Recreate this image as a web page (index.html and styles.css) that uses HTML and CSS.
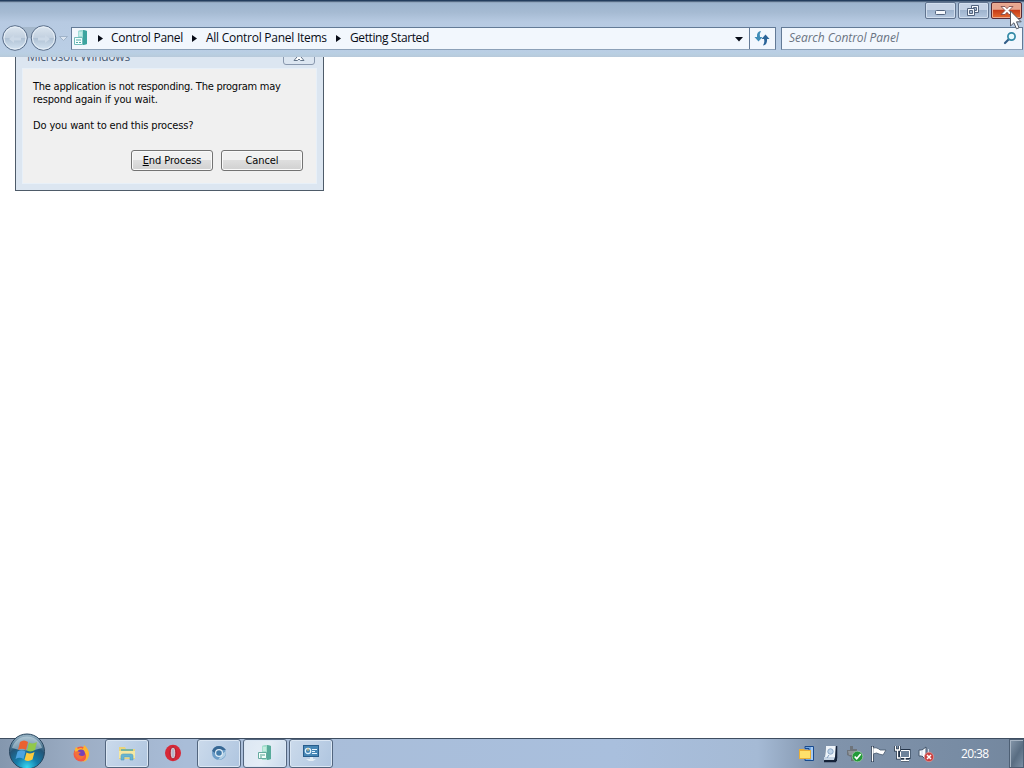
FILE: index.html
```html
<!DOCTYPE html>
<html lang="en">
<head>
<meta charset="utf-8">
<title>Getting Started</title>
<link rel="stylesheet" href="styles.css">
</head>
<body>
<div class="screen">
  <header class="window-frame">
    <div class="caption">
      <button class="cap-btn" aria-label="Minimize"><svg width="29" height="15" viewBox="0 0 29 15"><rect x="9.500" y="7.500" width="10" height="4" rx="1" fill="#f5f8fc" stroke="#53647e"/></svg></button>
      <button class="cap-btn" aria-label="Restore"><svg width="29" height="15" viewBox="0 0 29 15"><path d="M12.500 2.500h7v7h-7z" fill="#f5f8fc" stroke="#53647e"/><path d="M14.500 4.500h3v3h-3z" fill="#a4b7cf" stroke="#53647e"/><path d="M8.500 5.500h7v7h-7z" fill="#f5f8fc" stroke="#53647e"/><path d="M10.500 7.500h3v3h-3z" fill="#a4b7cf" stroke="#53647e"/></svg></button>
      <button class="cap-btn cap-close" aria-label="Close"><svg width="29" height="15" viewBox="0 0 29 15"><path d="M9 3.500h4l2 2.200 2-2.200h4l-4 4 4 4h-4l-2-2.200-2 2.200H9l4-4z" fill="#fff" stroke="#754040" stroke-width=".8"/></svg></button>
    </div>
    <div class="nav">
      <svg class="travel" width="70" height="32" viewBox="0 0 70 32">
        <defs><linearGradient id="ball" x2="0" y2="1"><stop stop-color="#dce6f0"/><stop offset=".48" stop-color="#c3d1e0"/><stop offset=".52" stop-color="#b0c2d5"/><stop offset="1" stop-color="#d5e4f2"/></linearGradient></defs>
        <path d="M14 5h30v8q-15 6-30 0z" fill="#a5b8cc"/>
        <g fill="url(#ball)" stroke="#596d88"><circle cx="15" cy="16" r="12.300"/><circle cx="43.500" cy="16" r="12.300"/></g>
        <g fill="none" stroke="#e7eff7"><circle cx="15" cy="16" r="11"/><circle cx="43.500" cy="16" r="11"/></g>
        <path d="M9 17l5-4v2.500h7v3h-7V21zM50 17l-5-4v2.500h-7v3h7V21z" fill="#ccd9e7"/>
        <path d="M59.500 14.500h8l-4 4z" fill="#dce6f1" stroke="#a0b3c9"/>
      </svg>
      <div class="address">
        <svg class="place" width="16" height="18" viewBox="0 0 16 18"><path d="M5 2l5-1 4 1v13l-4 1-5-1z" fill="#55b5b0"/><path d="M5 2l5-1v15H5z" fill="#a2ddd8"/><path d="M10 1l4 1v13l-4 1z" fill="#3da49f"/><path d="M6 4h3M6 6h3" stroke="#e2faf6"/><path d="M1.500 8.500h8v7h-8z" fill="#f4fffe" stroke="#73bcbb"/><path d="M3 11h5M3 13.500h2M6 13.500h2" stroke="#53aaa8"/></svg>
        <svg class="sep s1" width="5" height="7"><path d="M0 0l5 3.500-5 3.500z"/></svg>
        <span class="crumb c1">Control Panel</span>
        <svg class="sep" width="5" height="7"><path d="M0 0l5 3.500-5 3.500z"/></svg>
        <span class="crumb c2">All Control Panel Items</span>
        <svg class="sep" width="5" height="7"><path d="M0 0l5 3.500-5 3.500z"/></svg>
        <span class="crumb c3">Getting Started</span>
        <svg class="drop" width="8" height="5"><path d="M0 0h8l-4 4.500z"/></svg>
        <span class="refresh"><svg width="16" height="16" viewBox="0 0 16 16"><path d="M7 1Q2.500 1.500 3 7H.5l4 4.500 4-4.500H6Q5 4 7 1z" fill="#3f8db8"/><path d="M9 15.500q4.500-.5 4-6.500h2.500l-4-4.500-4 4.500H10q1 3.500-1 6.500z" fill="#2c6599"/></svg></span>
      </div>
      <div class="search">
        <span class="hint">Search Control Panel</span>
        <svg width="14" height="14" viewBox="0 0 14 14"><path d="M6 8l-4 4" stroke="#305d87" stroke-width="2.200" stroke-linecap="round"/><circle cx="8.500" cy="5.500" r="3.600" fill="#e8faff" stroke="#3289a6" stroke-width="1.700"/></svg>
      </div>
    </div>
  </header>
  <main class="content">
    <section class="dialog">
      <div class="dialog-title"><span>Microsoft Windows</span>
        <i class="dialog-close"><svg width="30" height="14" viewBox="0 0 30 14"><path d="M10.500 3.500h3l1.500 2 1.500-2h3l-2.500 3.500 3 3.500h-3.500L15 9l-1.500 1.500H10L13 7z" fill="#fff" stroke="#637488"/></svg></i>
      </div>
      <div class="dialog-body">
        <p><span class="l1">The application is not responding. The program may</span><br><span class="l2">respond again if you wait.</span></p>
        <p class="l3">Do you want to end this process?</p>
        <div class="actions"><button><span class="b1"><u>E</u>nd Process</span></button><button><span class="b2">Cancel</span></button></div>
      </div>
    </section>
  </main>
  <footer class="taskbar">
    <svg class="orb" width="38" height="36" viewBox="0 0 38 36">
      <defs><radialGradient id="orb" cx=".5" cy=".95" r=".9"><stop stop-color="#35d8f2"/><stop offset=".35" stop-color="#157daa"/><stop offset=".7" stop-color="#245577"/><stop offset="1" stop-color="#91aec0"/></radialGradient></defs>
      <circle cx="19" cy="18.500" r="17.500" fill="url(#orb)" stroke="#29465f"/>
      <path d="M4 15a15.500 15.500 0 0 1 30 0q-15 5-30 0z" fill="#d6e6ed" opacity=".5"/>
      <path d="M12 9q4-3 8 0l-2 8q-4-2.500-8 0z" fill="#ea6230"/><path d="M21 9.500q4 2 8-.5l-2 8q-4 2.500-8 .5z" fill="#91c84b"/><path d="M9.500 18.500q4-2.500 8 0l-2 7.500q-4-2.500-8 0z" fill="#4da3df"/><path d="M18.500 19.500q4 2 8-.5l-2 7.500q-4 2.500-8 .5z" fill="#fdca3c"/>
    </svg>
    <span class="task t-fire"><svg width="18" height="18" viewBox="0 0 18 18"><circle cx="9" cy="10" r="7.500" fill="#f45a45"/><path d="M3 5l1-2 2 2q3-2 5 0l1-4q5 4 5 9 0 7-7 8 5-2 4-7-1-4-5-3-4 0-6 1z" fill="#ffb52e"/><circle cx="9" cy="9.500" r="3.900" fill="#7642b8"/><path d="M2 8q4-2 7 1-3 0-2 2 3 2 6 0-2 5-6 4-4-2-5-7z" fill="#f4703a"/></svg></span>
    <span class="task framed"><svg width="18" height="18" viewBox="0 0 18 18"><path d="M1 3h6l1 2h9v10H1z" fill="#ead47b"/><path d="M3 5h12v3H3z" fill="#77b4a1"/><path d="M1 7h16v7H1z" fill="#f5e8a3"/><path d="M3 16v-4q0-2 2-2h8q2 0 2 2v4h-3v-3H6v3z" fill="#67b5d2" stroke="#579bb9" stroke-width=".6"/></svg></span>
    <span class="task t-opera"><svg width="18" height="18" viewBox="0 0 18 18"><ellipse cx="9" cy="9" rx="8" ry="8.300" fill="#d72837"/><ellipse cx="9" cy="9" rx="2.900" ry="6" fill="#e0c8cf" stroke="#a51525"/><ellipse cx="9" cy="9" rx="1.300" ry="4.700" fill="#b5b9cb"/></svg></span>
    <span class="task framed"><svg width="18" height="18" viewBox="0 0 18 18"><circle cx="9" cy="9" r="7" fill="#6c9dc8"/><path d="M2 7q2-5 7-5 4 0 7 4H9Q6 6 5 9z" fill="#386894"/><path d="M16 7q0 8-8 9l4-6z" fill="#b1cee4"/><circle cx="9" cy="9" r="3.400" fill="#427baa" stroke="#e0edf7" stroke-width="1.200"/></svg></span>
    <span class="task framed active"><svg width="18" height="18" viewBox="0 0 18 18"><path d="M6 2l5-1 4 1v13l-4 1-5-1z" fill="#70bda9"/><path d="M6 2l5-1v15H6z" fill="#a5dfcd"/><path d="M11 1l4 1v13l-4 1z" fill="#58ab9a"/><path d="M7 4h3M7 6h3" stroke="#e2faf2"/><path d="M2.500 8.500h8v6h-8z" fill="#f4fffb" stroke="#66aba0"/><path d="M4 11h5M4 13h2" stroke="#53a08f"/></svg></span>
    <span class="task framed"><svg width="18" height="18" viewBox="0 0 18 18"><rect x="1.500" y="1.500" width="15" height="11" fill="#4686b5" stroke="#285d8c"/><circle cx="6" cy="7" r="2.700" fill="none" stroke="#dff1ff" stroke-width="1.200"/><path d="M6 7V4" stroke="#e4c46a"/><path d="M10 5.500h5M10 7.500h3M10 9.500h5" stroke="#e6f4ff"/><path d="M8 13h3v2h3l-3 2H7l-3-2h4z" fill="#e4edf4"/></svg></span>
    <div class="tray">
      <svg width="18" height="18" viewBox="0 0 18 18"><path d="M7 1.500h8.500v14H7v-2h4v-10H7z" fill="#73a9e4" stroke="#184a8e"/><path d="M14 2v13" stroke="#dceaff"/><path d="M1 4h5l1 1h6v9H1z" fill="#e9ae35"/><path d="M2 6h10v7H2z" fill="#ffe16b"/></svg>
      <svg width="18" height="18" viewBox="0 0 18 18"><path d="M4 1h11v15H2l1-4z" fill="#162538"/><path d="M4 1h10l-1 11H3z" fill="#eef4fa"/><path d="M2 12h11l-1 3H2z" fill="#c7d5e5"/><path d="M14.500 1v12l-1 3.500H2" fill="none" stroke="#142239" stroke-width="1.500"/><circle cx="8.500" cy="6.500" r="2.700" fill="#bed2e7" stroke="#8aa6c5"/><path d="M7 10l-2 3" stroke="#809bbc"/></svg>
      <svg width="18" height="18" viewBox="0 0 18 18"><path d="M4 1h3v3h4v8H8v4H5v-4L1 10V5h3z" fill="#6e747b"/><path d="M2 6h7v4H3z" fill="#91969b"/><circle cx="11.500" cy="11.500" r="5.300" fill="#239a38" stroke="#b7d8be" stroke-width=".6"/><path d="M8.700 11.500l2 2.300 4-4.800" fill="none" stroke="#fff" stroke-width="1.700"/></svg>
      <svg width="18" height="18" viewBox="0 0 18 18"><path d="M2.500 1v16" stroke="#26374e" stroke-width="3"/><path d="M3 3q3-1 6 1l1 1h6l-3 5-4-1q-2-2-6 0z" fill="#fff" stroke="#48596d" stroke-width=".8"/><path d="M2.500 1.500v15" stroke="#fff" stroke-width="1.400"/></svg>
      <svg width="18" height="18" viewBox="0 0 18 18"><path d="M6 5.500h9v7H6z" fill="#63768b" stroke="#233449" stroke-width="3"/><path d="M6.500 5.500h9v7h-9z" fill="#6d8299" stroke="#fff"/><path d="M11 13v2m-4 .5h8M1.500 1v4h4V1M3.500 5v8h3" fill="none" stroke="#24364b" stroke-width="3"/><path d="M11 13v2m-4 .5h8M1.500 1v4h4V1M3.500 5v8h3" fill="none" stroke="#fff" stroke-width="1.300"/></svg>
      <svg width="18" height="18" viewBox="0 0 18 18"><path d="M1 5h3l4-3v13l-4-4H1z" fill="#f7fafd" stroke="#44566c"/><path d="M4 5v6M10.500 4v4" stroke="#c9d5e3"/><circle cx="11" cy="12" r="4.700" fill="#cc4140" stroke="#e9aaa8" stroke-width=".6"/><path d="M9 10l4 4m0-4l-4 4" stroke="#fff" stroke-width="1.500"/></svg>
      <time>20:38</time><span class="peek"></span>
    </div>
  </footer>
  <svg class="pointer" width="14" height="21" viewBox="0 0 14 21"><path d="M1.500 1v15l3.400-3.200 2.600 6 2.500-1-2.500-6h4.700z" fill="#fff" stroke="#555963"/></svg>
</div>
</body>
</html>
```

FILE: styles.css
```css
* { box-sizing: border-box; }
body { margin: 0; background: #fff; }
svg { display: block; flex: none; }
button { padding: 0; margin: 0; }
.screen { position: relative; width: 1024px; height: 768px; display: flex; flex-direction: column; overflow: hidden; }
.window-frame { height: 57px; flex: none; background: linear-gradient(#243d5d 0 1px, #8799ae 2px, #9db4ce 3px, #a5bad2 12px, #b7cae2 22px, #bacee5 50px, #b9cfe2 54px, #b7c9da); }
.caption { height: 22px; display: flex; justify-content: flex-end; gap: 2px; padding: 2px 2px 2px 0; }
.cap-btn { width: 31px; height: 17px; border: 1px solid #61748f; border-radius: 2px; box-shadow: inset 0 0 0 1px #d1deee; background: linear-gradient(#c3d1e4 0 45%, #9fb4ce 50%, #b5c8df); display: flex; }
.cap-close { border-color: #572a36; box-shadow: inset 0 0 0 1px #edac91; background: linear-gradient(#e8a58f 0 42%, #c53b18 48%, #e76b2f); }
.nav { height: 32px; display: flex; align-items: center; }
.travel { width: 70px; }
.address { width: 705px; height: 23px; margin-left: 1px; background: #f2f7fd; border: 1px solid #637a96; border-bottom-color: #8ca1b8; display: flex; align-items: center; font: 12px "Open Sans", "Noto Sans", sans-serif; color: #080c16; white-space: nowrap; }
.crumb { line-height: 20px; }
.place { margin-left: 1px; }
.s1 { margin-left: 9px; }
.sep { margin-top: 1px; }
.sep, .drop { fill: #070b16; }
.c1 { width: 73px; margin: 0 8px; letter-spacing: -.28px; }
.c2 { width: 123px; margin: 0 7px 0 9px; letter-spacing: -.26px; }
.c3 { width: 80px; margin-left: 9px; letter-spacing: -.4px; }
.drop { margin: 3px 6px 0 auto; }
.refresh { width: 26px; height: 21px; border-left: 1px solid #637a96; padding: 2px 4px; }
.search { width: 242px; height: 23px; margin-left: 5px; padding: 0 5px 0 7px; background: #f2f7fd; border: 1px solid #637a96; border-bottom-color: #8ca1b8; display: flex; align-items: center; justify-content: space-between; font: italic 12px "Open Sans", "Noto Sans", sans-serif; color: #6b7482; white-space: nowrap; }
.hint { padding-bottom: 2px; letter-spacing: -.05px; }
.content { flex: 1; overflow: hidden; background: #fff; }
.dialog { width: 309px; height: 151px; margin: -17px 0 0 15px; border: 1px solid #4e5b69; background: #dce6f1; padding: 0 6px 6px; font: 11px/13px "DejaVu Sans Condensed", "DejaVu Sans", sans-serif; color: #070707; }
.dialog-title { height: 27px; display: flex; justify-content: space-between; padding: 8px 2px 0 5px; color: #4c6077; font: 12px/16px "Open Sans", sans-serif; letter-spacing: -.25px; }
.dialog-close { width: 32px; height: 16px; border: 1px solid #8998ae; border-radius: 0 0 3px 3px; }
.dialog-body { height: 116px; border: 1px solid #e8f0f8; background: #f0f0f0; padding: 11px 13px 0 10px; white-space: nowrap; }
.dialog p { margin: 0; letter-spacing: -.24px; }
.dialog .l2 { letter-spacing: -.14px; }
.dialog .l3 { margin-top: 13px; letter-spacing: -.14px; }
.actions { display: flex; justify-content: flex-end; gap: 8px; margin-top: 18px; }
.actions button { width: 82px; height: 21px; border: 1px solid #737373; border-radius: 3px; box-shadow: inset 0 0 0 1px #fafafa; background: linear-gradient(#f1f1f1 0 45%, #dedede 50%, #d1d1d1); font: 11px/19px "DejaVu Sans Condensed", sans-serif; letter-spacing: -.07px; color: #050505; }
.taskbar { position: relative; height: 30px; flex: none; border-top: 1px solid #3e4d60; background: linear-gradient(90deg, #8497ae, #9daec5 8%, #a9bdd8 18%, #a9bfdd 60%, #a5bad5 74%, #8194ac 80%, #778ba3 95%, #73869d); display: flex; padding-left: 59px; }
.orb { position: absolute; left: 8px; top: -6px; }
.task { width: 44px; height: 29px; margin-right: 2px; padding-bottom: 1px; display: flex; align-items: center; justify-content: center; }
.t-fire, .t-opera { margin-right: 2px; }
.framed { border: 1px solid #52657e; border-radius: 3px; box-shadow: inset 0 0 0 1px #dbe7f4; background: linear-gradient(115deg, #cbdaeb, #bdd0e6 50%, #afc5df); }
.active { background: linear-gradient(115deg, #dce7f3, #e4edf6 50%, #c7d9eb); }
.tray { margin-left: auto; display: flex; align-items: center; gap: 6px; }
.tray time { width: 29px; margin-left: 19px; color: #fff; font: 12px/18px "Open Sans", sans-serif; letter-spacing: -.6px; white-space: nowrap; }
.peek { width: 15px; height: 29px; margin-left: 13px; border: 1px solid #4d5f74; box-shadow: inset 1px 1px #a7b5c4; background: linear-gradient(120deg, #8799ac, #596d82 55%, #7b8fa4); }
.pointer { position: absolute; left: 1009px; top: 10px; }
```
